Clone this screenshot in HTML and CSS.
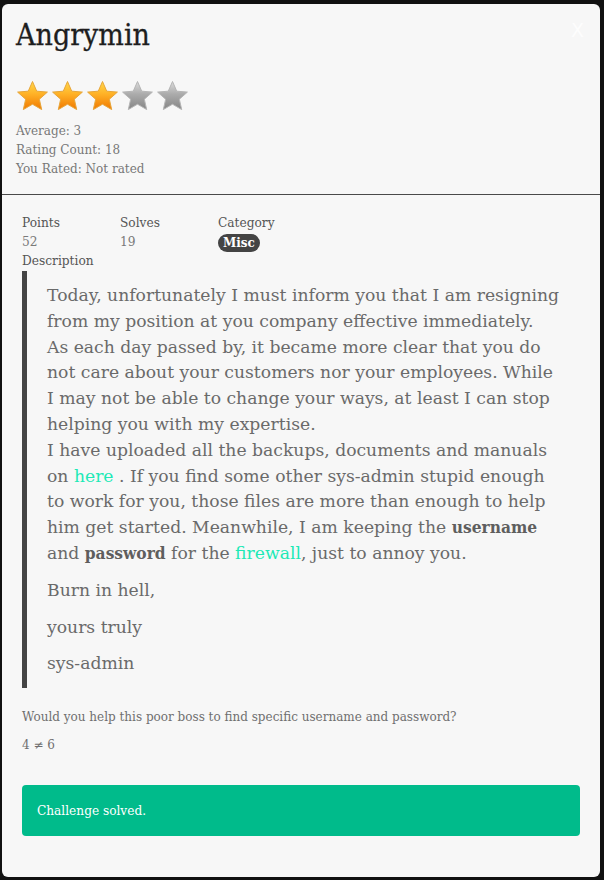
FILE: index.html
```html
<!DOCTYPE html>
<html lang="en">
<head>
<meta charset="utf-8">
<title>Angrymin</title>
<link rel="stylesheet" href="styles.css">
</head>
<body>
<svg class="defs" width="0" height="0" aria-hidden="true">
  <defs>
    <linearGradient id="g-on" x1="0" y1="0" x2="0" y2="1">
      <stop offset="0" stop-color="#ffd84a"/>
      <stop offset="0.45" stop-color="#ffb126"/>
      <stop offset="1" stop-color="#f07800"/>
    </linearGradient>
    <linearGradient id="g-off" x1="0" y1="0" x2="0" y2="1">
      <stop offset="0" stop-color="#dcdcdc"/>
      <stop offset="0.45" stop-color="#ababab"/>
      <stop offset="1" stop-color="#858585"/>
    </linearGradient>
  </defs>
</svg>
<div class="modal">
  <span class="close">X</span>
  <header class="head">
    <h1 class="title">Angrymin</h1>
    <div class="stars">
      <svg class="star" viewBox="0 0 33 32"><polygon class="on" points="16.5,1.5 20.73,11.18 31.4,12.1 23.35,19.22 25.7,29.6 16.5,24.2 7.3,29.6 9.65,19.22 1.6,12.1 12.27,11.18"/></svg>
      <svg class="star" viewBox="0 0 33 32"><polygon class="on" points="16.5,1.5 20.73,11.18 31.4,12.1 23.35,19.22 25.7,29.6 16.5,24.2 7.3,29.6 9.65,19.22 1.6,12.1 12.27,11.18"/></svg>
      <svg class="star" viewBox="0 0 33 32"><polygon class="on" points="16.5,1.5 20.73,11.18 31.4,12.1 23.35,19.22 25.7,29.6 16.5,24.2 7.3,29.6 9.65,19.22 1.6,12.1 12.27,11.18"/></svg>
      <svg class="star" viewBox="0 0 33 32"><polygon class="off" points="16.5,1.5 20.73,11.18 31.4,12.1 23.35,19.22 25.7,29.6 16.5,24.2 7.3,29.6 9.65,19.22 1.6,12.1 12.27,11.18"/></svg>
      <svg class="star" viewBox="0 0 33 32"><polygon class="off" points="16.5,1.5 20.73,11.18 31.4,12.1 23.35,19.22 25.7,29.6 16.5,24.2 7.3,29.6 9.65,19.22 1.6,12.1 12.27,11.18"/></svg>
    </div>
    <div class="stats">
      <div>Average: 3</div>
      <div>Rating Count: 18</div>
      <div>You Rated: Not rated</div>
    </div>
  </header>
  <section class="body">
    <div class="meta">
      <div class="col">
        <div class="label">Points</div>
        <div class="value">52</div>
      </div>
      <div class="col">
        <div class="label">Solves</div>
        <div class="value">19</div>
      </div>
      <div class="col">
        <div class="label">Category</div>
        <div class="value"><span class="badge">Misc</span></div>
      </div>
    </div>
    <div class="label">Description</div>
    <blockquote class="quote">
      <p>Today, unfortunately I must inform you that I am resigning<br>
      from my position at you company effective immediately.<br>
      As each day passed by, it became more clear that you do<br>
      not care about your customers nor your employees. While<br>
      I may not be able to change your ways, at least I can stop<br>
      helping you with my expertise.<br>
      I have uploaded all the backups, documents and manuals<br>
      on <a href="#">here</a> . If you find some other sys-admin stupid enough<br>
      to work for you, those files are more than enough to help<br>
      him get started. Meanwhile, I am keeping the <b>username</b><br>
      and <b>password</b> for the <a href="#">firewall</a>, just to annoy you.</p>
      <p>Burn in hell,</p>
      <p>yours truly</p>
      <p>sys-admin</p>
    </blockquote>
    <p class="question">Would you help this poor boss to find specific username and password?</p>
    <p class="hint">4 ≠ 6</p>
    <div class="alert">Challenge solved.</div>
  </section>
</div>
</body>
</html>
```
FILE: styles.css
```css
html, body {
  margin: 0;
  padding: 0;
}
body {
  background: #111111;
  font-family: "DejaVu Serif", "Liberation Serif", serif;
  padding: 4px 4px 3px 2px;
}
.defs {
  display: block;
  width: 0;
  height: 0;
}
.modal {
  position: relative;
  width: 598px;
  height: 873px;
  background: #f7f7f7;
  border-radius: 6px;
  box-sizing: border-box;
}
.close {
  position: absolute;
  top: 15px;
  right: 16px;
  font-family: "DejaVu Sans", sans-serif;
  font-size: 19px;
  color: #fdfdfd;
  line-height: 22px;
}
.head {
  padding: 14px 14px 15px 14px;
  border-bottom: 1px solid #4a4a4a;
}
.title {
  margin: 0;
  font-family: "DejaVu Serif Condensed", "DejaVu Serif", serif;
  font-size: 30px;
  font-weight: normal;
  line-height: 33px;
  color: #1e1e1e;
  -webkit-text-stroke: 0.3px #1e1e1e;
}
.stars {
  display: flex;
  gap: 2px;
  margin-top: 29px;
}
.star {
  width: 33px;
  height: 32px;
  display: block;
}
.star .on {
  fill: url(#g-on);
  stroke: #e7a63a;
  stroke-width: 1;
  stroke-linejoin: round;
}
.star .off {
  fill: url(#g-off);
  stroke: #b5b5b5;
  stroke-width: 1;
  stroke-linejoin: round;
}
.stats {
  margin-top: 10px;
  font-size: 12px;
  line-height: 19px;
  color: #777;
}
.body {
  padding: 19px 20px 0 20px;
}
.meta {
  display: grid;
  grid-template-columns: 98px 98px 98px;
}
.label {
  font-size: 12.2px;
  line-height: 19px;
  color: #555;
}
.value {
  font-size: 12.2px;
  line-height: 19px;
  height: 19px;
  color: #7a7a7a;
}
.badge {
  display: inline-block;
  margin-top: 1px;
  height: 18px;
  line-height: 18px;
  padding: 0 5px;
  border-radius: 9px;
  background: #444;
  color: #fff;
  font-weight: bold;
  font-size: 12px;
  vertical-align: top;
}
.quote {
  margin: 0;
  border-left: 5px solid #444;
  padding: 12px 0 11px 20px;
  font-size: 17.2px;
  line-height: 25.8px;
  color: #6a6a6a;
}
.quote p {
  margin: 0 0 11px 0;
}
.quote p:last-child {
  margin-bottom: 0;
}
.quote b {
  font-family: "DejaVu Serif Condensed", "DejaVu Serif", serif;
  color: #5e5e5e;
}
.quote a {
  color: #1de9b6;
  text-decoration: none;
}
.question {
  margin: 20px 0 0 0;
  font-size: 12px;
  line-height: 19px;
  color: #6f6f6f;
}
.hint {
  margin: 9px 0 0 0;
  font-size: 12px;
  line-height: 19px;
  color: #6f6f6f;
}
.alert {
  margin-top: 30px;
  background: #00bb8b;
  border-radius: 4px;
  padding: 15px 15px;
  line-height: 21px;
  font-family: "DejaVu Serif Condensed", "DejaVu Serif", serif;
  font-size: 13.5px;
  color: #fff;
}
```
